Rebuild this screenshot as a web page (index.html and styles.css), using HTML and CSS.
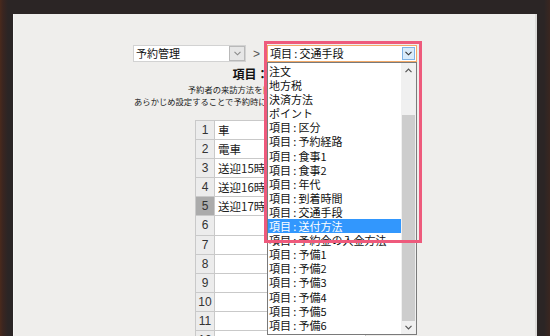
FILE: index.html
```html
<!DOCTYPE html>
<html lang="ja">
<head>
<meta charset="utf-8">
<link rel="stylesheet" href="styles.css">
</head>
<body>
<div class="frame">
  <div class="panel">
    <div class="toolbar">
      <div class="select sel1">
        <span class="sel-text">予約管理</span>
        <span class="sel-btn btn-gray"><svg width="7" height="5" viewBox="0 0 7 5"><path d="M0.5 0.8 L3.5 3.8 L6.5 0.8" fill="none" stroke="#8a8a8a" stroke-width="1.1"/></svg></span>
      </div>
      <span class="sep">&gt;</span>
      <div class="combo">
        <div class="select sel2">
          <span class="sel-text">項目&#8201;:&#8201;交通手段</span>
          <span class="sel-btn btn-blue"><svg width="7" height="5" viewBox="0 0 7 5"><path d="M0.5 0.8 L3.5 3.8 L6.5 0.8" fill="none" stroke="#333" stroke-width="1.1"/></svg></span>
        </div>
        <div class="list">
          <div class="items">
            <div class="item">注文</div>
            <div class="item">地方税</div>
            <div class="item">決済方法</div>
            <div class="item">ポイント</div>
            <div class="item">項目&#8201;:&#8201;区分</div>
            <div class="item">項目&#8201;:&#8201;予約経路</div>
            <div class="item">項目&#8201;:&#8201;食事1</div>
            <div class="item">項目&#8201;:&#8201;食事2</div>
            <div class="item">項目&#8201;:&#8201;年代</div>
            <div class="item">項目&#8201;:&#8201;到着時間</div>
            <div class="item">項目&#8201;:&#8201;交通手段</div>
            <div class="item active">項目&#8201;:&#8201;送付方法</div>
            <div class="item">項目&#8201;:&#8201;予約金の入金方法</div>
            <div class="item">項目&#8201;:&#8201;予備1</div>
            <div class="item">項目&#8201;:&#8201;予備2</div>
            <div class="item">項目&#8201;:&#8201;予備3</div>
            <div class="item">項目&#8201;:&#8201;予備4</div>
            <div class="item">項目&#8201;:&#8201;予備5</div>
            <div class="item">項目&#8201;:&#8201;予備6</div>
          </div>
          <div class="scrollbar">
            <div class="arrow"><svg width="7" height="5" viewBox="0 0 7 5"><path d="M0.5 4.2 L3.5 1.2 L6.5 4.2" fill="none" stroke="#555" stroke-width="1.2"/></svg></div>
            <div class="track-top"></div>
            <div class="thumb"></div>
            <div class="arrow arrow-down"><svg width="7" height="5" viewBox="0 0 7 5"><path d="M0.5 0.8 L3.5 3.8 L6.5 0.8" fill="none" stroke="#555" stroke-width="1.2"/></svg></div>
          </div>
        </div>
        <div class="highlight-frame"></div>
      </div>
    </div>

    <h1 class="title">項目：交通手段</h1>
    <p class="desc">予約者の来訪方法を目的に応じて登録します。</p>
    <p class="desc">あらかじめ設定することで予約時に来訪方法を選択できるようになります。</p>

    <div class="grid">
      <div class="num">1</div><div class="cell">車</div>
      <div class="num">2</div><div class="cell">電車</div>
      <div class="num">3</div><div class="cell">送迎15時便</div>
      <div class="num">4</div><div class="cell">送迎16時便</div>
      <div class="num sel">5</div><div class="cell">送迎17時便</div>
      <div class="num">6</div><div class="cell"></div>
      <div class="num">7</div><div class="cell"></div>
      <div class="num">8</div><div class="cell"></div>
      <div class="num">9</div><div class="cell"></div>
      <div class="num">10</div><div class="cell"></div>
      <div class="num">11</div><div class="cell"></div>
      <div class="num">12</div><div class="cell"></div>
    </div>
  </div>
</div>
</body>
</html>
```

FILE: styles.css
```css
html, body {
  margin: 0;
  padding: 0;
}
body {
  width: 550px;
  height: 336px;
  overflow: hidden;
  background: #2c2626;
  font-family: "Noto Sans CJK JP", "Liberation Sans", sans-serif;
  color: #222;
}
.frame {
  box-sizing: border-box;
  width: 550px;
  height: 336px;
  padding: 14px 13px 0 13px;
  overflow: hidden;
  background:
    linear-gradient(to right, #4a2a1c 0, #3a2520 3px, rgba(44,38,38,0) 8px),
    linear-gradient(to left, #3a2620 0, rgba(44,38,38,0) 6px),
    #2b2525;
}
.panel {
  box-sizing: border-box;
  height: 420px;
  background: #efeeec;
  border-left: 1px solid #f6f6f5;
  border-right: 2px solid #dddcda;
  padding-top: 31px;
}
.toolbar {
  display: flex;
  align-items: flex-start;
  height: 17px;
  margin-left: 119px;
}
.select {
  box-sizing: border-box;
  position: relative;
  height: 17px;
  background: #fff;
  display: flex;
  align-items: center;
}
.sel1 {
  width: 113px;
  border: 1px solid #d2d2d2;
}
.sel2 {
  width: 150px;
  border: 1px solid #f2a866;
}
.sel-text {
  flex: 1;
  font-size: 11px;
  line-height: 15px;
  padding-left: 2px;
  color: #111;
  white-space: nowrap;
}
.sel-btn {
  box-sizing: border-box;
  display: flex;
  align-items: center;
  justify-content: center;
  height: 15px;
}
.btn-gray {
  width: 16px;
  background: #e6e6e6;
  border: 1px solid #b9b9b9;
}
.btn-blue {
  width: 13px;
  height: 13px;
  margin-right: 1px;
  background: #d9ebfa;
  border: 1px solid #7fb3e6;
}
.sep {
  width: 21px;
  text-align: center;
  font-family: "Liberation Sans", sans-serif;
  font-size: 12px;
  line-height: 18px;
  color: #555;
}
.combo {
  position: relative;
  width: 150px;
  height: 17px;
}
.list {
  position: absolute;
  left: 0;
  top: 17px;
  box-sizing: border-box;
  width: 150px;
  height: 273px;
  background: #fff;
  border: 1px solid #7a7a7a;
  display: flex;
  z-index: 2;
}
.items {
  flex: 1;
  padding-top: 1px;
}
.item {
  height: 14.1px;
  line-height: 14.1px;
  font-size: 11px;
  padding-left: 1px;
  color: #111;
  white-space: nowrap;
}
.item.active {
  background: #3297fd;
  color: #fff;
}
.scrollbar {
  width: 15px;
  display: flex;
  flex-direction: column;
  background: #f0f0f0;
}
.arrow {
  height: 15px;
  display: flex;
  align-items: center;
  justify-content: center;
}
.arrow-down {
  height: 13px;
}
.track-top {
  height: 37px;
}
.thumb {
  flex: 1;
  margin: 0 1px;
  background: #cdcdcd;
}
.highlight-frame {
  position: absolute;
  left: -3px;
  top: -4px;
  box-sizing: border-box;
  width: 158px;
  height: 202px;
  border: 3px solid #ee5a7c;
  z-index: 3;
  pointer-events: none;
}
.title {
  margin: 5px 0 0;
  text-align: center;
  font-size: 12px;
  line-height: 14px;
  font-weight: bold;
  color: #111;
}
.desc {
  margin: 0;
  text-align: center;
  font-size: 8.3px;
  line-height: 12px;
  color: #222;
}
.title + .desc {
  margin-top: 2px;
}
.grid {
  display: grid;
  grid-template-columns: 18px 150px;
  grid-auto-rows: 18.1px;
  gap: 1px;
  width: max-content;
  margin: 13px 0 0 181px;
  background: #c9c9c9;
  border: 1px solid #c9c9c9;
}
.num {
  background: #ececec;
  text-align: center;
  font-family: "Liberation Sans", sans-serif;
  font-size: 12px;
  line-height: 18px;
  color: #333;
}
.num.sel {
  background: #ababab;
}
.cell {
  background: #fff;
  padding-left: 3px;
  font-size: 11.5px;
  line-height: 18px;
  color: #222;
  white-space: nowrap;
  overflow: hidden;
}
```
